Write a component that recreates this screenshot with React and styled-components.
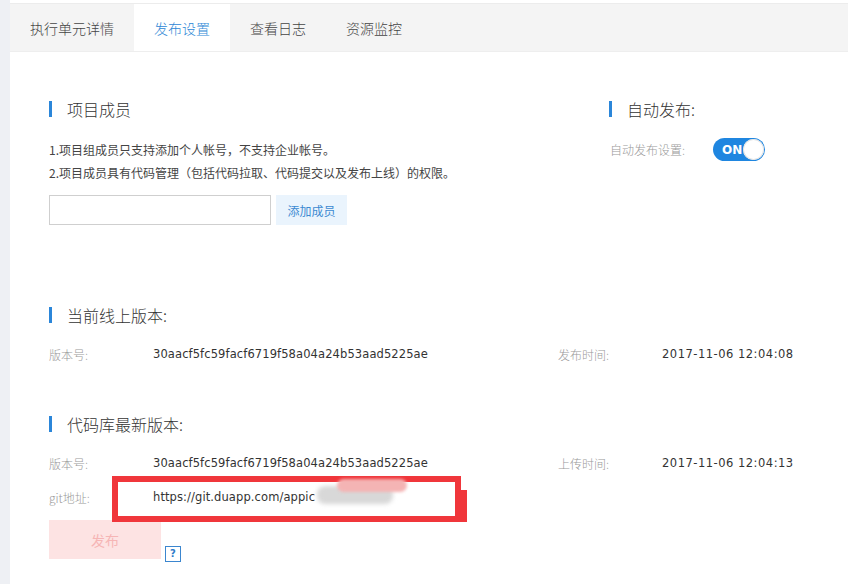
import React from 'react'
import styled, { createGlobalStyle } from 'styled-components'

const Global = createGlobalStyle`
  html, body {
    margin: 0;
    padding: 0;
    background: #eef0f4;
    font-family: "Noto Sans CJK SC", "Liberation Sans", sans-serif;
    color: #333;
  }
`

const Main = styled.div`
  margin-left: 10px;
  padding-top: 3px;
  height: 581px;
  background: #fff;
  overflow: hidden;
`

const TabBar = styled.div`
  display: flex;
  height: 49px;
  background: #f4f4f4;
  border-top: 1px solid #ececec;
  border-bottom: 1px solid #eeeeee;
  box-sizing: border-box;
`

const Tab = styled.div`
  display: flex;
  align-items: center;
  padding: 0 20px;
  font-size: 14px;
  font-weight: 300;
  color: ${p => (p.$active ? '#2e87d6' : '#444')};
  background: ${p => (p.$active ? '#fff' : 'transparent')};
`

const Content = styled.div`
  padding: 48px 0 0 39px;
`

const TopRow = styled.div`
  display: flex;
`

const LeftCol = styled.div`
  width: 560px;
`

const RightCol = styled.div`
  flex: 1;
`

const Title = styled.div`
  display: flex;
  align-items: center;
  height: 18px;
  font-size: 16px;
  font-weight: 300;
  color: #333;
  margin-top: ${p => p.$mt || 0}px;
  &::before {
    content: '';
    width: 3px;
    height: 16px;
    background: #2b86d9;
    margin-right: 15px;
  }
`

const Notes = styled.div`
  margin-top: 20px;
  font-size: 12px;
  line-height: 23px;
  color: #444;
`

const AddRow = styled.div`
  display: flex;
  gap: 5px;
  margin-top: 11px;
`

const Input = styled.input`
  width: 222px;
  height: 30px;
  box-sizing: border-box;
  border: 1px solid #cfcfcf;
  outline: none;
  padding: 0 8px;
`

const AddButton = styled.button`
  width: 71px;
  height: 30px;
  border: none;
  background: #eaf4fd;
  color: #3c8ad2;
  font-size: 12px;
  font-family: "Noto Sans CJK SC", sans-serif;
  padding: 0;
`

const SettingRow = styled.div`
  display: flex;
  align-items: center;
  margin-top: 20px;
  height: 23px;
  padding-left: 1px;
`

const Toggle = styled.div`
  width: 52px;
  height: 23px;
  border-radius: 12px;
  background: #1f86e0;
  display: flex;
  align-items: center;
  justify-content: space-between;
  padding: 0 1px 0 9px;
  box-sizing: border-box;
  color: #fff;
  font-family: "DejaVu Sans", sans-serif;
  font-weight: bold;
  font-size: 12px;
`

const Knob = styled.div`
  width: 21px;
  height: 21px;
  border-radius: 50%;
  background: #fff;
  box-shadow: inset 0 0 0 1px #e3e3e3;
`

const Label = styled.span`
  width: ${p => p.$w || 104}px;
  flex-shrink: 0;
  font-size: 12px;
  font-weight: 300;
  color: #999;
`

const Row = styled.div`
  position: relative;
  display: flex;
  align-items: center;
  height: 34px;
  margin-top: ${p => p.$mt || 0}px;
`

const Value = styled.span`
  width: ${p => p.$w || 'auto'};
  flex-shrink: 0;
  font-family: "DejaVu Sans", sans-serif;
  font-size: 11.5px;
  letter-spacing: ${p => p.$ls || 0.1}px;
  color: #333;
`

const Highlight = styled.div`
  position: absolute;
  left: 63px;
  top: -4px;
  width: 349px;
  height: 46px;
  box-sizing: border-box;
  border: 6px solid #f0363b;
  &::after {
    content: '';
    position: absolute;
    right: -12px;
    top: 8px;
    width: 6px;
    height: 32px;
    background: #f0363b;
  }
`

const Smudge = styled.div`
  position: absolute;
  left: ${p => p.$x}px;
  top: ${p => p.$y}px;
  width: ${p => p.$w}px;
  height: ${p => p.$h}px;
  border-radius: 8px;
  background: ${p => p.$c};
  filter: blur(${p => p.$b || 2}px);
`

const ActionRow = styled.div`
  display: flex;
  align-items: flex-end;
  gap: 4px;
  margin-top: 6px;
`

const PublishButton = styled.button`
  width: 112px;
  height: 39px;
  border: none;
  background: #fde3e3;
  color: #f6b5b5;
  font-size: 14px;
  font-family: "Noto Sans CJK SC", sans-serif;
`

const Help = styled.span`
  width: 14px;
  height: 14px;
  margin-bottom: -3px;
  border: 1px solid #3b86cf;
  color: #2f7cc9;
  font-family: "DejaVu Sans", sans-serif;
  font-weight: bold;
  font-size: 10px;
  line-height: 14px;
  text-align: center;
`

const hash = '30aacf5fc59facf6719f58a04a24b53aad5225ae'

export default function App() {
  return (
    <>
      <Global />
      <Main>
        <TabBar>
          <Tab>执行单元详情</Tab>
          <Tab $active>发布设置</Tab>
          <Tab>查看日志</Tab>
          <Tab>资源监控</Tab>
        </TabBar>
        <Content>
          <TopRow>
            <LeftCol>
              <Title>项目成员</Title>
              <Notes>
                <div>1.项目组成员只支持添加个人帐号，不支持企业帐号。</div>
                <div>2.项目成员具有代码管理（包括代码拉取、代码提交以及发布上线）的权限。</div>
              </Notes>
              <AddRow>
                <Input />
                <AddButton>添加成员</AddButton>
              </AddRow>
            </LeftCol>
            <RightCol>
              <Title>自动发布:</Title>
              <SettingRow>
                <Label $w={103}>自动发布设置:</Label>
                <Toggle>
                  ON
                  <Knob />
                </Toggle>
              </SettingRow>
            </RightCol>
          </TopRow>

          <Title $mt={81}>当前线上版本:</Title>
          <Row $mt={13}>
            <Label>版本号:</Label>
            <Value $w="405px">{hash}</Value>
            <Label>发布时间:</Label>
            <Value $ls={0.5}>2017-11-06 12:04:08</Value>
          </Row>

          <Title $mt={44}>代码库最新版本:</Title>
          <Row $mt={13}>
            <Label>版本号:</Label>
            <Value $w="405px">{hash}</Value>
            <Label>上传时间:</Label>
            <Value $ls={0.5}>2017-11-06 12:04:13</Value>
          </Row>
          <Row>
            <Label>git地址:</Label>
            <Value>https://git.duapp.com/appic</Value>
            <Highlight />
            <Smudge $x={268} $y={6} $w={76} $h={18} $c="#d8d8d8" />
            <Smudge $x={288} $y={-1} $w={70} $h={13} $c="#f4b4b4" $b={1.5} />
          </Row>
          <ActionRow>
            <PublishButton>发布</PublishButton>
            <Help>?</Help>
          </ActionRow>
        </Content>
      </Main>
    </>
  )
}
